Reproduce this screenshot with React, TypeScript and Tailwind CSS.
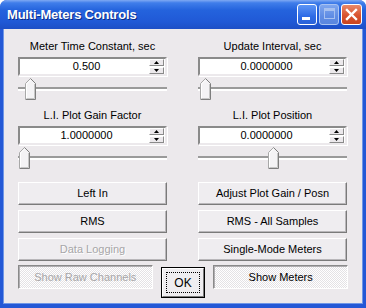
import React from 'react';

const FACE = 'bg-[#ECE9EC]';

function TitleButtons() {
  return (
    <div className="flex items-center gap-[2px] mr-[4px]">
      {/* minimize */}
      <div className="relative w-[20px] h-[21px] rounded-[3px] border border-white bg-[linear-gradient(to_bottom,#5D95F5,#2E6BE6_60%,#2A62D8)]">
        <div className="absolute left-[4px] top-[12px] w-[8px] h-[3px] bg-white" />
      </div>
      {/* maximize (disabled) */}
      <div className="relative w-[20px] h-[21px] rounded-[3px] border border-[#A9C3F2] bg-[linear-gradient(to_bottom,#7FA6EE,#5F8CE4_60%,#5A86DE)]">
        <div className="absolute left-[4px] top-[3px] w-[11px] h-[11px] border border-[#A6C0F0] border-t-[3px]" />
      </div>
      {/* close */}
      <div className="flex items-center justify-center w-[21px] h-[21px] rounded-[3px] border border-white bg-[linear-gradient(to_bottom,#E8896A,#D9542F_55%,#C9451F)]">
        <svg width="13" height="13" viewBox="0 0 13 13">
          <path d="M2 2 L11 11 M11 2 L2 11" stroke="white" strokeWidth="2.4" strokeLinecap="square" />
        </svg>
      </div>
    </div>
  );
}

function SpinBox({ value }: { value: string }) {
  return (
    <div className="flex h-[19px] bg-white border-2 border-t-[#8A8A8A] border-l-[#8A8A8A] border-b-[#ECE9EC] border-r-[#ECE9EC] shadow-[1px_1px_0_#FFFFFF]">
      <div className="flex-1 flex items-center justify-center leading-none pl-[4px]">{value}</div>
      <div className="flex flex-col w-[16px] gap-[1px] pr-[1px]">
        <div className="flex-1 flex items-center justify-center bg-[#ECE9EC] border border-t-white border-l-white border-b-[#8A8A8A] border-r-[#8A8A8A]">
          <svg width="5" height="3" viewBox="0 0 5 3"><path d="M2.5 0 L5 3 L0 3 Z" fill="black" /></svg>
        </div>
        <div className="flex-1 flex items-center justify-center bg-[#ECE9EC] border border-t-white border-l-white border-b-[#8A8A8A] border-r-[#8A8A8A]">
          <svg width="5" height="3" viewBox="0 0 5 3"><path d="M0 0 L5 0 L2.5 3 Z" fill="black" /></svg>
        </div>
      </div>
    </div>
  );
}

function Slider({ pos }: { pos: number }) {
  return (
    <div className="relative h-[23px] mt-[1px]">
      <div className="absolute left-0 right-0 top-[10px] h-[4px] border-t-2 border-t-[#9A9A9A] border-b-2 border-b-white bg-[#D8D6D8]" />
      <svg className="absolute top-[1px]" style={{ left: pos }} width="12" height="22" viewBox="0 0 12 22">
        <polygon points="0.5,21 0.5,5.5 5.5,0.5 10.5,5.5 10.5,21" fill="#F4F3F5" />
        <polyline points="0.5,21 0.5,5.5 5.5,0.5" fill="none" stroke="#A8A8A8" />
        <polyline points="5.5,0.5 10.5,5.5 10.5,21.5 0.5,21.5" fill="none" stroke="#7E7E7E" />
        <polyline points="1.5,20 1.5,6 5.5,2" fill="none" stroke="#FFFFFF" />
        <polyline points="9.5,6 9.5,20.5 1.5,20.5" fill="none" stroke="#C6C6C6" />
      </svg>
    </div>
  );
}

function Group({ label, value, pos }: { label: string; value: string; pos: number }) {
  return (
    <div className="flex flex-col">
      <div className="h-[13px] leading-[13px] text-center">{label}</div>
      <div className="mt-[4px]">
        <SpinBox value={value} />
      </div>
      <Slider pos={pos} />
    </div>
  );
}

function Btn({ children, disabled }: { children: React.ReactNode; disabled?: boolean }) {
  return (
    <div
      className={`flex items-center justify-center h-[23px] bg-[#EFEDF0] border border-t-white border-l-white border-b-[#7A7A7A] border-r-[#7A7A7A] shadow-[inset_-1px_-1px_0_#B9B7BA] ${
        disabled ? 'text-[#A7A6A8] [text-shadow:1px_1px_0_#FFFFFF]' : 'text-black'
      }`}
    >
      {children}
    </div>
  );
}

function Toggled({ children, disabled, w }: { children: React.ReactNode; disabled?: boolean; w: string }) {
  return (
    <div
      className={`flex items-center justify-center h-[24px] ${w} border border-t-[#8A8A8A] border-l-[#8A8A8A] border-b-white border-r-white shadow-[inset_1px_1px_0_#B0AEB1] bg-[repeating-conic-gradient(#FFFFFF_0_25%,#E4E2E5_0_50%)] bg-[length:2px_2px] ${
        disabled ? 'text-[#A7A6A8]' : 'text-black'
      }`}
    >
      {children}
    </div>
  );
}

export default function App() {
  return (
    <div className="w-[366px] h-[308px] bg-white font-['Liberation_Sans',Arial,sans-serif] text-[11px] text-black select-none">
      <div className="flex flex-col w-full h-full rounded-t-[7px] overflow-hidden bg-[#2458D6]">
        {/* title bar */}
        <div className="flex items-center justify-between h-[29px] shrink-0 bg-[linear-gradient(to_bottom,#7FA9F3_0%,#3F7DEA_10%,#2463DD_35%,#2059D6_75%,#1D4FC6_100%)]">
          <div className="pl-[7px] text-white font-bold text-[13px] tracking-[-0.2px] [text-shadow:1px_1px_0_#0C2C86]">
            Multi-Meters Controls
          </div>
          <TitleButtons />
        </div>

        {/* client area */}
        <div className={`flex-1 mx-[3px] mb-[4px] ${FACE} border-l border-r border-b border-[#6F96E6] flex flex-col`}>
          <div className="flex px-[14px] pt-[11px] gap-[31px]">
            <div className="w-[149px] flex flex-col gap-[9px]">
              <Group label="Meter Time Constant, sec" value="0.500" pos={7} />
              <Group label="L.I. Plot Gain Factor" value="1.0000000" pos={1} />
            </div>
            <div className="w-[149px] flex flex-col gap-[9px]">
              <Group label="Update Interval, sec" value="0.0000000" pos={2} />
              <Group label="L.I. Plot Position" value="0.0000000" pos={70} />
            </div>
          </div>

          <div className="flex px-[14px] pt-[13px] gap-[31px]">
            <div className="w-[149px] flex flex-col gap-[5px]">
              <Btn>Left In</Btn>
              <Btn>RMS</Btn>
              <Btn disabled>Data Logging</Btn>
            </div>
            <div className="w-[149px] flex flex-col gap-[5px]">
              <Btn>Adjust Plot Gain / Posn</Btn>
              <Btn>RMS - All Samples</Btn>
              <Btn>Single-Mode Meters</Btn>
            </div>
          </div>

          <div className="flex items-start px-[14px] pt-[4px]">
            <Toggled w="w-[135px]" disabled>
              Show Raw Channels
            </Toggled>
            <div className="ml-[8px] mt-[2px] w-[45px] h-[31px] border border-black">
              <div className="w-full h-full flex items-center justify-center bg-[#EFEDF0] border border-t-white border-l-white border-b-[#7A7A7A] border-r-[#7A7A7A] p-[3px]">
                <div className="w-full h-full flex items-center justify-center border border-dotted border-black text-[12px]">
                  OK
                </div>
              </div>
            </div>
            <Toggled w="w-[135px] ml-[8px]">Show Meters</Toggled>
          </div>
        </div>
      </div>
    </div>
  );
}
